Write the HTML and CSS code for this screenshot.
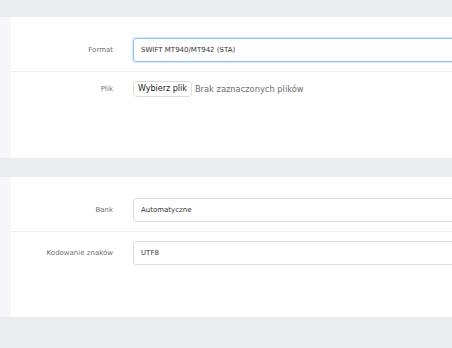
FILE: index.html
```html
<!DOCTYPE html>
<html lang="pl">
<head>
  <meta charset="UTF-8" />
  <meta name="viewport" content="width=device-width, initial-scale=1.0" />
  <title>Import wyciągu</title>
  <link rel="stylesheet" href="styles.css">
</head>
<body>
  <div class="page">
    <div class="card card-file">
      <div class="card-side"></div>
      <div class="card-body">
        <div class="form-row">
          <label class="form-label">Format</label>
          <div class="form-field">
            <div class="input input-focus">SWIFT MT940/MT942 (STA)</div>
          </div>
        </div>
        <div class="form-row">
          <label class="form-label">Plik</label>
          <div class="form-field">
            <span class="file-button">Wybierz plik</span>
            <span class="file-status">Brak zaznaczonych plików</span>
          </div>
        </div>
      </div>
    </div>

    <div class="card card-options">
      <div class="card-side"></div>
      <div class="card-body">
        <div class="form-row">
          <label class="form-label">Bank</label>
          <div class="form-field">
            <div class="input">Automatyczne</div>
          </div>
        </div>
        <div class="form-row">
          <label class="form-label">Kodowanie znaków</label>
          <div class="form-field">
            <div class="input">UTF8</div>
          </div>
        </div>
      </div>
    </div>
  </div>
</body>
</html>
```

FILE: styles.css
```css
* {
  box-sizing: border-box;
}

body {
  margin: 0;
  background-color: #ebecf0;
  font-family: 'DejaVu Sans', sans-serif;
  color: #333;
  overflow: hidden;
}

.page {
  padding-top: 17px;
  width: 640px;
}

.card {
  display: flex;
  background: #ffffff;
  margin-bottom: 19px;
}

.card-file {
  height: 141px;
}

.card-options {
  height: 140px;
}

.card-side {
  width: 11px;
  background: #f7f7f9;
}

.card-body {
  flex: 1;
  padding-top: 12px;
}

.form-row {
  display: flex;
  align-items: center;
  padding: 9px 0;
  border-bottom: 1px solid #f0f0f2;
}

.form-row:last-child {
  border-bottom: none;
}

.form-label {
  width: 102px;
  margin-right: 20px;
  text-align: right;
  font-size: 7px;
  color: #707070;
}

.form-field {
  flex: 1;
  display: flex;
  align-items: center;
}

.input {
  width: 100%;
  height: 24px;
  display: flex;
  align-items: center;
  padding: 0 7px;
  border: 1px solid #dcdde0;
  border-radius: 3px;
  font-size: 7px;
  color: #333;
}

.input-focus {
  border-color: #8ec5f7;
  box-shadow: 0 0 0 1px #d6eafc;
}

.file-button {
  display: inline-block;
  padding: 1px 4px;
  border: 1px solid #dcdcdc;
  border-radius: 4px;
  background: #ffffff;
  font-size: 8px;
  color: #1c1c1c;
  line-height: 12px;
}

.file-status {
  margin-left: 3px;
  font-size: 8.3px;
  color: #6e6e6e;
}
```
